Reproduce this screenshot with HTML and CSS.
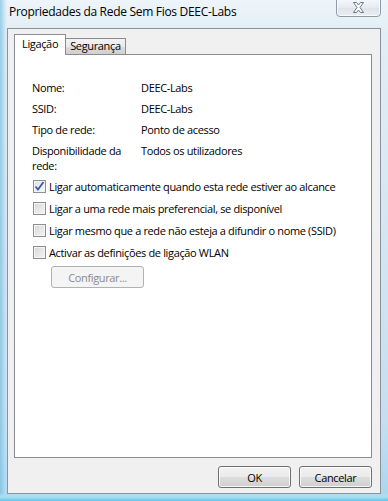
FILE: index.html
```html
<!DOCTYPE html>
<html lang="pt">
<head>
<meta charset="utf-8">
<title>Propriedades da Rede Sem Fios DEEC-Labs</title>
<link rel="stylesheet" href="styles.css">
</head>
<body>
<div class="window">
  <div class="titlebar">
    <span class="title">Propriedades da Rede Sem Fios DEEC-Labs</span>
    <button class="close" aria-label="Fechar">
      <svg width="13" height="11" viewBox="0 0 13 11">
        <path d="M1.5 0.5h3l2 2.5 2-2.5h3l-3.5 5 3.5 5h-3l-2-2.5-2 2.5h-3l3.5-5z" fill="#fff" stroke="#6d7784" stroke-width="1" stroke-linejoin="round"/>
      </svg>
    </button>
  </div>
  <div class="client">
    <div class="tabs">
      <div class="tab active">Ligação</div>
      <div class="tab">Segurança</div>
    </div>
    <div class="panel">
      <div class="info">
        <span>Nome:</span><span>DEEC-Labs</span>
        <span>SSID:</span><span>DEEC-Labs</span>
        <span>Tipo de rede:</span><span>Ponto de acesso</span>
        <span>Disponibilidade da<br>rede:</span><span>Todos os utilizadores</span>
      </div>
      <div class="checks">
        <label class="check"><span class="box checked"><svg width="11" height="11" viewBox="0 0 11 11"><path d="M1.5 5.5l2.5 3 5.5-7.5" fill="none" stroke="#3d5a9a" stroke-width="1.8"/></svg></span>Ligar automaticamente quando esta rede estiver ao alcance</label>
        <label class="check"><span class="box"></span>Ligar a uma rede mais preferencial, se disponível</label>
        <label class="check"><span class="box"></span>Ligar mesmo que a rede não esteja a difundir o nome (SSID)</label>
        <label class="check"><span class="box"></span>Activar as definições de ligação WLAN</label>
      </div>
      <button class="btn disabled">Configurar...</button>
    </div>
    <div class="footer">
      <button class="btn dlg">OK</button>
      <button class="btn dlg">Cancelar</button>
    </div>
  </div>
</div>
</body>
</html>
```
FILE: styles.css
```css
html, body {
  margin: 0;
  padding: 0;
}
body {
  width: 388px;
  height: 501px;
  overflow: hidden;
  font-family: "Open Sans", "Noto Sans", sans-serif;
  font-size: 11px;
  letter-spacing: -0.35px;
  color: #000;
}
.window {
  height: 501px;
  box-sizing: border-box;
  display: flex;
  flex-direction: column;
  background:
    linear-gradient(to top, #5cc4ea 0, #a8e0f4 4px, rgba(255,255,255,0) 9px),
    linear-gradient(to right, rgba(120,190,225,0.7) 0, rgba(200,230,245,0.3) 6px, rgba(255,255,255,0) 8px),
    linear-gradient(to bottom, #eef5fa 0, #e2eef6 30px, #d7e7f2 200px, #c6def0 420px, #a9d6ef 501px);
}
.titlebar {
  height: 28px;
  flex: none;
  display: flex;
  justify-content: space-between;
  align-items: flex-start;
  padding: 0 7px 0 9px;
}
.title {
  font-size: 12px;
  letter-spacing: -0.3px;
  line-height: 14px;
  margin-top: 5px;
  color: #000;
}
.close {
  width: 45px;
  height: 19px;
  margin-top: -2px;
  padding: 0;
  border: 1px solid #8f9aa6;
  border-radius: 0 0 4px 4px;
  background: linear-gradient(to bottom, #f6f8fa, #e6ebf0 50%, #dde3ea 51%, #e9eef3);
  display: flex;
  align-items: center;
  justify-content: center;
  box-shadow: inset 0 0 0 1px rgba(255,255,255,0.7);
}
.client {
  flex: 1;
  margin: 0 7px 7px 7px;
  border: 1px solid #8a929b;
  background: #f0f0f0;
  display: flex;
  flex-direction: column;
  padding: 5px 8px 0 6px;
}
.tabs {
  display: flex;
  align-items: flex-end;
  height: 20px;
  position: relative;
  z-index: 1;
}
.tab {
  box-sizing: border-box;
  height: 16px;
  padding: 0 4px;
  line-height: 14px;
  border: 1px solid #898c95;
  border-bottom: none;
  background: linear-gradient(to bottom, #f2f2f2, #ebebeb 50%, #dddddd 51%, #cfcfcf);
  margin-left: -1px;
}
.tab.active {
  padding: 2px 7px 0 7px;
  background: #fff;
  margin-left: 0;
  margin-bottom: -1px;
  height: 21px;
  z-index: 2;
  position: relative;
}
.panel {
  height: 404px;
  box-sizing: border-box;
  border: 1px solid #898c95;
  background: #fff;
  padding: 25px 17px 0 17px;
  display: flex;
  flex-direction: column;
  align-items: flex-start;
}
.info {
  display: grid;
  grid-template-columns: 109px auto;
  row-gap: 6px;
  line-height: 15px;
  white-space: nowrap;
}
.checks {
  margin-top: 6px;
  display: flex;
  flex-direction: column;
  gap: 7px;
  margin-left: 1px;
}
.check {
  display: flex;
  align-items: center;
  gap: 3px;
  line-height: 15px;
  white-space: nowrap;
}
.box {
  width: 11px;
  height: 11px;
  border: 1px solid #8e8f8f;
  background: linear-gradient(135deg, #d8d8d8, #f4f4f4);
  box-shadow: inset 0 0 0 1px #f4f4f4;
  display: flex;
  align-items: center;
  justify-content: center;
  flex: none;
}
.box.checked {
  background: linear-gradient(135deg, #dde3ec, #f6f8fb);
}
.btn {
  font-family: inherit;
  font-size: 11px;
  letter-spacing: -0.35px;
  color: #000;
  border: 1px solid #707070;
  border-radius: 3px;
  background: linear-gradient(to bottom, #f2f2f2, #ebebeb 50%, #dddddd 51%, #cfcfcf);
  box-shadow: inset 0 0 0 1px rgba(255,255,255,0.8);
  padding: 0;
}
.btn.disabled {
  margin-left: 19px;
  margin-top: 6px;
  width: 93px;
  height: 22px;
  color: #8a8a8a;
  border-color: #adb2b5;
  background: #f4f4f4;
  box-shadow: none;
}
.footer {
  display: flex;
  justify-content: flex-end;
  gap: 8px;
  padding-top: 8px;
}
.btn.dlg {
  width: 73px;
  height: 22px;
}
```
